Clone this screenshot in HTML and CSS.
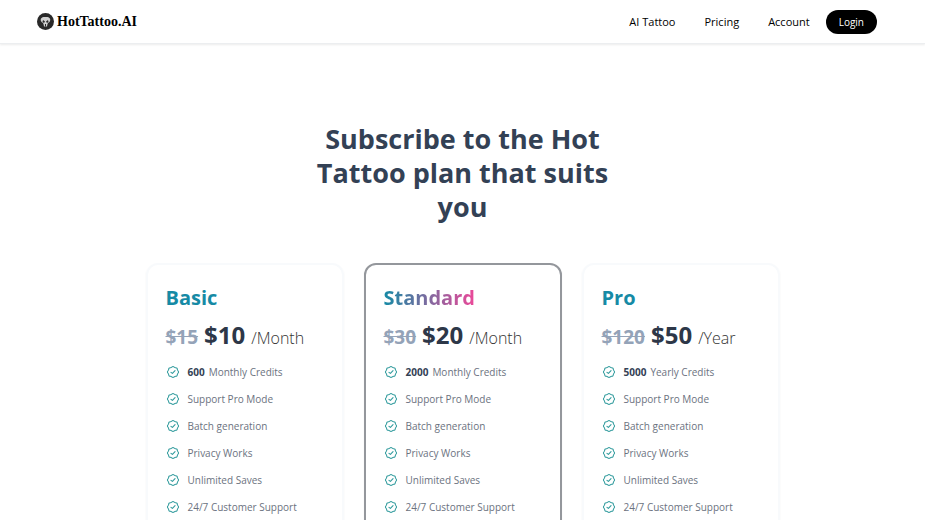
FILE: index.html
```html
<!DOCTYPE html>
<html lang="en">
<head>
<meta charset="utf-8">
<meta name="viewport" content="width=device-width, initial-scale=1">
<title>HotTattoo.AI Pricing</title>
<link rel="stylesheet" href="styles.css">
</head>
<body>
<svg width="0" height="0" class="sprite" aria-hidden="true">
  <symbol id="check" viewBox="0 0 24 24">
    <path d="M8.500 12.500L11 14.500 15.500 9.500M21.500 12c0 1.300-1.200 2.200-1.700 3.200-.5 1.100-.2 2.500-1.100 3.400-.9.900-2.300.7-3.400 1.100-1.100.5-2 1.800-3.300 1.800s-2.200-1.300-3.300-1.800c-1.100-.4-2.500-.2-3.400-1.100-.9-.9-.6-2.300-1.100-3.400C3.700 14.200 2.500 13.300 2.500 12s1.200-2.200 1.700-3.200c.5-1.100.2-2.500 1.100-3.400.9-.9 2.300-.7 3.400-1.100C9.800 3.800 10.700 2.500 12 2.500s2.200 1.300 3.300 1.800c1.100.4 2.500.2 3.400 1.100.9.900.6 2.300 1.100 3.400.5 1 1.700 1.900 1.700 3.200z" fill="none" stroke="currentColor" stroke-width="1.8" stroke-linecap="round" stroke-linejoin="round"/>
  </symbol>
</svg>
<header class="header">
  <a class="brand" href="#">
    <svg class="logo" viewBox="0 0 34 34" aria-hidden="true">
      <circle cx="17" cy="17" r="17" fill="#292929"/>
      <path d="M17 8C10 7 6 11 8 16c1 3 4 3 5 6l1 5h6l1-5c1-3 4-3 5-6 2-5-2-9-9-8z" fill="#d0d0d0"/>
      <path d="M12 14l4 3-2 3-3-2zM22 14l-4 3 2 3 3-2z" fill="#292929"/>
      <path d="M17 22v5" fill="none" stroke="#292929" stroke-width="2"/>
    </svg>
    <span>HotTattoo.AI</span>
  </a>
  <nav class="nav">
    <a href="#">AI Tattoo</a>
    <a href="#">Pricing</a>
    <a href="#">Account</a>
    <button class="login" type="button">Login</button>
  </nav>
</header>
<main class="main">
  <h1 class="title">Subscribe to the Hot Tattoo plan that suits you</h1>
  <div class="plans">
    <section class="plan">
      <h2 class="name">Basic</h2>
      <p class="price"><s>$15</s><strong>$10</strong><span>/Month</span></p>
      <ul class="features">
        <li><svg><use href="#check"/></svg><b>600</b>Monthly Credits</li>
        <li><svg><use href="#check"/></svg>Support Pro Mode</li>
        <li><svg><use href="#check"/></svg>Batch generation</li>
        <li><svg><use href="#check"/></svg>Privacy Works</li>
        <li><svg><use href="#check"/></svg>Unlimited Saves</li>
        <li><svg><use href="#check"/></svg>24/7 Customer Support</li>
      </ul>
    </section>
    <section class="plan featured">
      <h2 class="name">Standard</h2>
      <p class="price"><s>$30</s><strong>$20</strong><span>/Month</span></p>
      <ul class="features">
        <li><svg><use href="#check"/></svg><b>2000</b>Monthly Credits</li>
        <li><svg><use href="#check"/></svg>Support Pro Mode</li>
        <li><svg><use href="#check"/></svg>Batch generation</li>
        <li><svg><use href="#check"/></svg>Privacy Works</li>
        <li><svg><use href="#check"/></svg>Unlimited Saves</li>
        <li><svg><use href="#check"/></svg>24/7 Customer Support</li>
      </ul>
    </section>
    <section class="plan">
      <h2 class="name">Pro</h2>
      <p class="price"><s>$120</s><strong>$50</strong><span>/Year</span></p>
      <ul class="features">
        <li><svg><use href="#check"/></svg><b>5000</b>Yearly Credits</li>
        <li><svg><use href="#check"/></svg>Support Pro Mode</li>
        <li><svg><use href="#check"/></svg>Batch generation</li>
        <li><svg><use href="#check"/></svg>Privacy Works</li>
        <li><svg><use href="#check"/></svg>Unlimited Saves</li>
        <li><svg><use href="#check"/></svg>24/7 Customer Support</li>
      </ul>
    </section>
  </div>
</main>
</body>
</html>
```
FILE: styles.css
```css
* { box-sizing: border-box; margin: 0; padding: 0; }
html { scrollbar-width: none; }
body { font-family: "Open Sans", "Noto Sans", sans-serif; color: #334155; background: #fff; }
.sprite { position: absolute; }
a { color: inherit; text-decoration: none; }
.header { display: flex; align-items: center; justify-content: space-between; height: 44px; padding: 0 48px 0 37px; border-bottom: 1px solid #eceef0; box-shadow: 0 1px 2px rgba(0, 0, 0, .08); color: #000; }
.brand { display: flex; align-items: center; gap: 3px; font: bold 14px "Liberation Serif", serif; }
.logo { width: 17px; height: 17px; }
.nav { display: flex; align-items: center; gap: 29px; font-size: 11px; }
.login { height: 24px; margin-left: -13px; padding: 0 13px; border: 0; border-radius: 12px; background: #000; color: #fff; font: 10px "Open Sans", sans-serif; }
.main { padding: 78px 16px 0; }
.title { max-width: 300px; margin: 0 auto 39px; text-align: center; font-size: 27px; line-height: 34px; }
.plans { display: grid; grid-template-columns: repeat(3, 1fr); gap: 20px; max-width: 634px; margin: 0 auto; }
.plan { padding: 20px 18px 32px; border: 2px solid #f8fafc; border-radius: 12px; box-shadow: 0 1px 2px rgba(0, 0, 0, .06); }
.featured { border-color: #94979c; }
.name { width: max-content; font-size: 20px; line-height: 26px; color: #168aa5; }
.featured .name { background: linear-gradient(90deg, #168aa5, #ec4899); background-clip: text; color: transparent; }
.price { display: flex; align-items: baseline; gap: 6px; margin: 8px 0 11px; line-height: 32px; white-space: nowrap; }
.price s { font-size: 19px; font-weight: 700; color: #94a3b8; }
.price strong { font-size: 24px; color: #2d3748; }
.price span { font-size: 16px; font-weight: 300; color: #333; }
.features { display: grid; gap: 13px; list-style: none; font-size: 10px; line-height: 14px; color: #6b7280; }
.features li { display: flex; align-items: center; }
.features svg { width: 14px; height: 14px; margin-right: 8px; color: #2f9a9c; }
.features b { margin-right: 4px; color: #334155; }
```
